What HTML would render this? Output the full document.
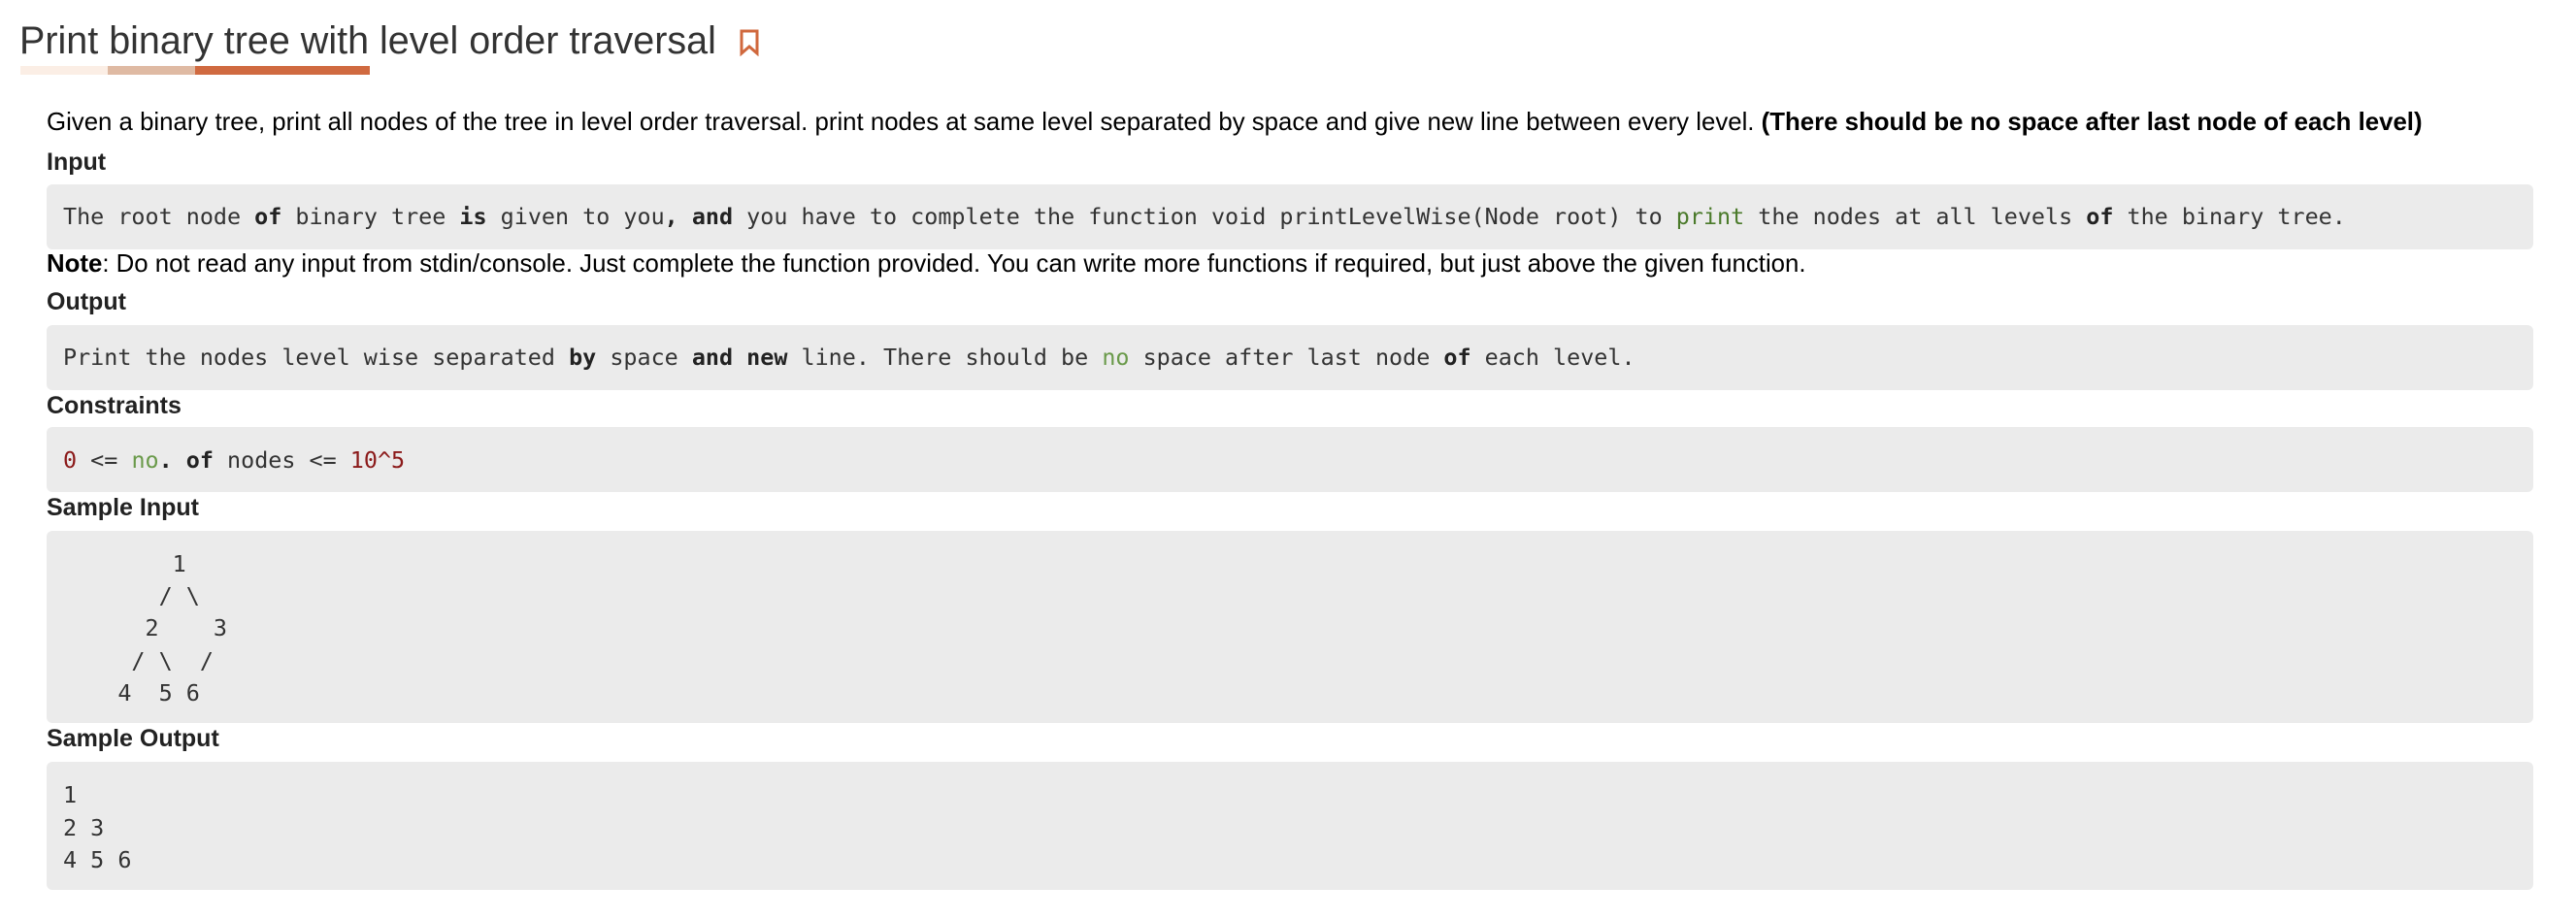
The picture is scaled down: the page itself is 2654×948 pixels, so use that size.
<!DOCTYPE html>
<html><head><meta charset="utf-8"><style>
body{margin:0;width:2654px;height:948px;background:#fff;position:relative;overflow:hidden;font-family:"Liberation Sans","DejaVu Sans",sans-serif;color:#000}
.a{position:absolute;white-space:pre}
.t{font-size:39.5px;color:#333;left:20px;top:20px}
.bar{position:absolute;top:68px;height:9px}
.p{font-size:25.8px;left:48px}
.h{font-size:25px;font-weight:bold;left:48px;color:#222}
.box{position:absolute;left:48px;width:2562px;background:#ebebeb;border-radius:6px}
.c{font-family:"DejaVu Sans Mono","Liberation Mono",monospace;font-size:23.4px;color:#333;left:65px}
.c b{color:#222}
.g{color:#6a9a4a}.gr{color:#4a7a2a}.r{color:#8b1a1a}
</style></head><body>
<div class="a t">Print binary tree with level order traversal</div>
<svg class="a" style="left:761px;top:30px" width="22" height="28" viewBox="0 0 22 28"><path d="M3 2H19V25L11 18L3 25Z" fill="none" stroke="#d0683d" stroke-width="3" stroke-linejoin="miter"/></svg>
<div class="bar" style="left:21px;width:90px;background:#fbeee5"></div>
<div class="bar" style="left:111px;width:90px;background:#dfbaa3"></div>
<div class="bar" style="left:201px;width:180px;background:#d06a40"></div>

<div class="a p" style="top:112px">Given a binary tree, print all nodes of the tree in level order traversal. print nodes at same level separated by space and give new line between every level. <b>(There should be no space after last node of each level)</b></div>
<div class="a h" style="top:153px">Input</div>
<div class="box" style="top:190px;height:67px"></div>
<div class="a c" style="top:209px">The root node <b>of</b> binary tree <b>is</b> given to you<b>,</b> <b>and</b> you have to complete the function void printLevelWise(Node root) to <span class="gr">print</span> the nodes at all levels <b>of</b> the binary tree.</div>
<div class="a p" style="top:258px"><b>Note</b>: Do not read any input from stdin/console. Just complete the function provided. You can write more functions if required, but just above the given function.</div>
<div class="a h" style="top:297px">Output</div>
<div class="box" style="top:335px;height:67px"></div>
<div class="a c" style="top:354px">Print the nodes level wise separated <b>by</b> space <b>and</b> <b>new</b> line. There should be <span class="g">no</span> space after last node <b>of</b> each level.</div>
<div class="a h" style="top:404px;font-weight:600">Constraints</div>
<div class="box" style="top:440px;height:67px"></div>
<div class="a c" style="top:460px"><span class="r">0</span> &lt;= <span class="g">no</span><b>.</b> <b>of</b> nodes &lt;= <span class="r">10^5</span></div>
<div class="a h" style="top:509px">Sample Input</div>
<div class="box" style="top:547px;height:198px"></div>
<div class="a c" style="top:565px;line-height:33.2px">        1
       / \
      2    3
     / \  /
    4  5 6</div>
<div class="a h" style="top:747px">Sample Output</div>
<div class="box" style="top:785px;height:132px"></div>
<div class="a c" style="top:803px;line-height:33.5px">1
2 3
4 5 6</div>
</body></html>
